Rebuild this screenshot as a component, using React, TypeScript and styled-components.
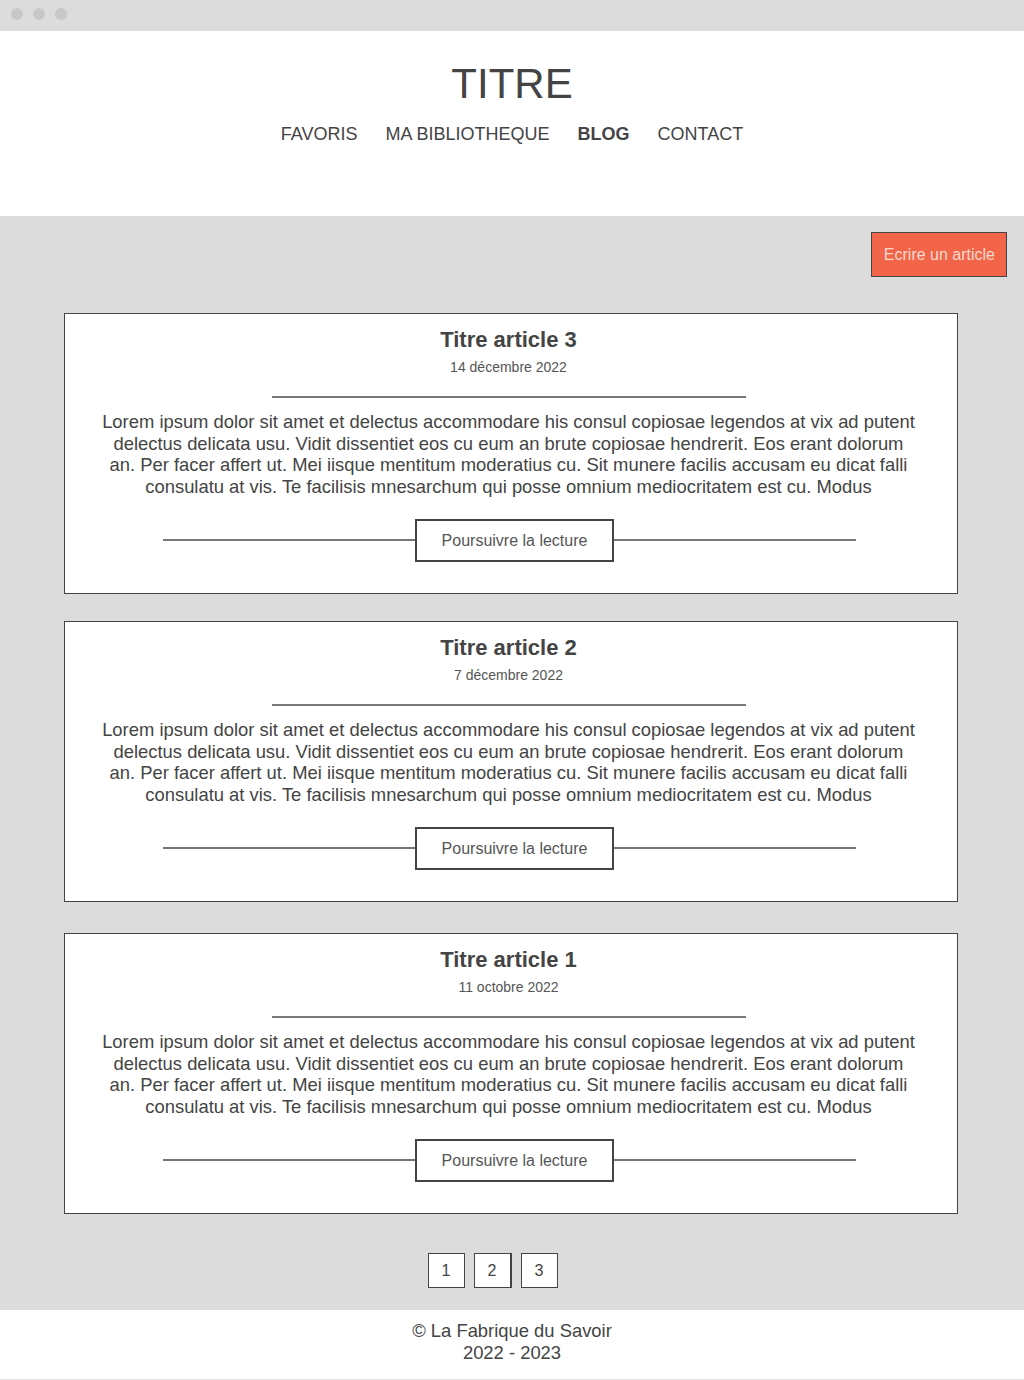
import React from "react";
import styled, { createGlobalStyle } from "styled-components";

const GlobalStyle = createGlobalStyle`
  html, body {
    margin: 0;
    padding: 0;
    background: #ffffff;
  }
  body {
    font-family: "Liberation Sans", Arial, Helvetica, sans-serif;
    color: #444444;
  }
  * { box-sizing: border-box; }
`;

const WindowBar = styled.div`
  height: 31px;
  background: #dcdcdc;
  display: flex;
  align-items: flex-start;
  gap: 10px;
  padding: 8px 0 0 11px;
`;

const Dot = styled.span`
  width: 12px;
  height: 12px;
  border-radius: 50%;
  background: #c8c8c8;
`;

const Header = styled.header`
  height: 185px;
  background: #ffffff;
  display: flex;
  flex-direction: column;
  align-items: center;
  padding-top: 29px;
`;

const SiteTitle = styled.h1`
  margin: 0;
  font-size: 42px;
  line-height: 48px;
  font-weight: 400;
  color: #444444;
`;

const Nav = styled.nav`
  display: flex;
  gap: 28px;
  margin-top: 16px;
`;

const NavLink = styled.a<{ $active?: boolean }>`
  font-size: 18px;
  line-height: 20px;
  color: #444444;
  text-decoration: none;
  font-weight: ${(p) => (p.$active ? 700 : 400)};
`;

const Main = styled.main`
  background: #dcdcdc;
  padding: 16px 0 22px;
`;

const ActionRow = styled.div`
  display: flex;
  justify-content: flex-end;
  padding-right: 17px;
`;

const WriteButton = styled.button`
  height: 45px;
  padding: 0 11px 0 12px;
  background: #f26549;
  border: 1px solid #444444;
  color: #f5d9d0;
  font-family: inherit;
  font-size: 16px;
  line-height: 43px;
  cursor: pointer;
`;

const CardList = styled.div`
  display: flex;
  flex-direction: column;
  padding: 36px 66px 0 64px;
`;

const Card = styled.article<{ $gapAfter: number }>`
  height: 281px;
  background: #ffffff;
  border: 1px solid #444444;
  margin-bottom: ${(p) => p.$gapAfter}px;
  display: flex;
  flex-direction: column;
  align-items: center;
  padding: 13px 5px 0 0;
`;

const CardTitle = styled.h2`
  margin: 0;
  font-size: 22px;
  line-height: 26px;
  font-weight: 700;
  color: #444444;
`;

const CardDate = styled.div`
  margin-top: 6px;
  font-size: 14px;
  line-height: 17px;
  color: #555555;
`;

const Divider = styled.div`
  width: 474px;
  height: 2px;
  background: #777777;
  margin-top: 20px;
`;

const Excerpt = styled.p`
  margin: 13px 0 0;
  font-size: 18.4px;
  line-height: 21.7px;
  text-align: center;
  color: #444444;
  white-space: nowrap;
`;

const ReadRow = styled.div`
  display: flex;
  align-items: center;
  margin-top: 21px;
  margin-left: 2px;
`;

const Rule = styled.span<{ $w: number }>`
  width: ${(p) => p.$w}px;
  height: 2px;
  background: #777777;
`;

const ReadButton = styled.button`
  width: 199px;
  height: 43px;
  background: #ffffff;
  border: 2px solid #444444;
  color: #555555;
  font-family: inherit;
  font-size: 16px;
  line-height: 20px;
  padding: 1px 0 0;
  cursor: pointer;
`;

const Pagination = styled.div`
  display: flex;
  justify-content: center;
  gap: 9px;
  margin-top: 39px;
  padding-right: 39px;
`;

const PageBox = styled.a<{ $wide?: boolean }>`
  width: ${(p) => (p.$wide ? 38 : 37)}px;
  height: 35px;
  display: flex;
  align-items: center;
  justify-content: center;
  padding-top: 1px;
  background: #ffffff;
  border: 1px solid #444444;
  border-right-width: ${(p) => (p.$wide ? 2 : 1)}px;
  color: #444444;
  font-size: 16px;
  text-decoration: none;
`;

const Footer = styled.footer`
  height: 70px;
  background: #ffffff;
  border-bottom: 1px solid #e2e2e2;
  padding-top: 10px;
  text-align: center;
  font-size: 18.4px;
  line-height: 22px;
  color: #444444;
`;

const lines = [
  "Lorem ipsum dolor sit amet et delectus accommodare his consul copiosae legendos at vix ad putent",
  "delectus delicata usu. Vidit dissentiet eos cu eum an brute copiosae hendrerit. Eos erant dolorum",
  "an. Per facer affert ut. Mei iisque mentitum moderatius cu. Sit munere facilis accusam eu dicat falli",
  "consulatu at vis. Te facilisis mnesarchum qui posse omnium mediocritatem est cu. Modus",
];

const articles = [
  { title: "Titre article 3", date: "14 décembre 2022", gap: 27 },
  { title: "Titre article 2", date: "7 décembre 2022", gap: 31 },
  { title: "Titre article 1", date: "11 octobre 2022", gap: 0 },
];

export default function App() {
  return (
    <>
      <GlobalStyle />
      <WindowBar>
        <Dot />
        <Dot />
        <Dot />
      </WindowBar>
      <Header>
        <SiteTitle>TITRE</SiteTitle>
        <Nav>
          <NavLink href="#">FAVORIS</NavLink>
          <NavLink href="#">MA BIBLIOTHEQUE</NavLink>
          <NavLink href="#" $active>
            BLOG
          </NavLink>
          <NavLink href="#">CONTACT</NavLink>
        </Nav>
      </Header>
      <Main>
        <ActionRow>
          <WriteButton>Ecrire un article</WriteButton>
        </ActionRow>
        <CardList>
          {articles.map((a) => (
            <Card key={a.title} $gapAfter={a.gap}>
              <CardTitle>{a.title}</CardTitle>
              <CardDate>{a.date}</CardDate>
              <Divider />
              <Excerpt>
                {lines.map((l, i) => (
                  <React.Fragment key={i}>
                    {l}
                    {i < lines.length - 1 && <br />}
                  </React.Fragment>
                ))}
              </Excerpt>
              <ReadRow>
                <Rule $w={252} />
                <ReadButton>Poursuivre la lecture</ReadButton>
                <Rule $w={242} />
              </ReadRow>
            </Card>
          ))}
        </CardList>
        <Pagination>
          <PageBox href="#">1</PageBox>
          <PageBox href="#" $wide>
            2
          </PageBox>
          <PageBox href="#">3</PageBox>
        </Pagination>
      </Main>
      <Footer>
        © La Fabrique du Savoir
        <br />
        2022 - 2023
      </Footer>
    </>
  );
}
